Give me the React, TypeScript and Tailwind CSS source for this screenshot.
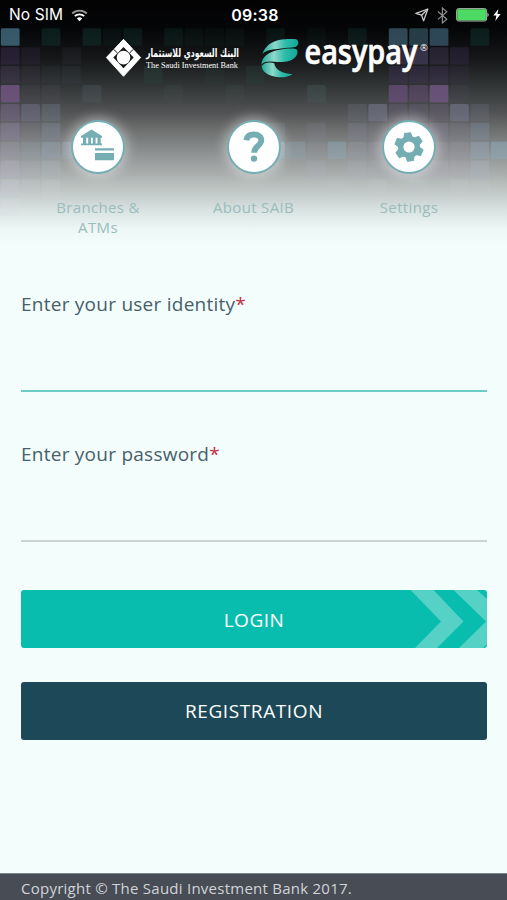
import type { ReactNode } from "react";
import { clsx } from "clsx";

// [column, row, colour, opacity] of the lit tiles behind the header
const tiles: [number, number, string, number][] = [
  [0, 0, "#3d6274", 0.9], [2, 0, "#12332f", 0.5], [4, 0, "#12332f", 0.5], [5, 0, "#12332f", 0.2],
  [6, 0, "#12332f", 0.4], [8, 0, "#12332f", 0.35], [9, 0, "#12332f", 0.2], [10, 0, "#12332f", 0.15],
  [11, 0, "#12332f", 0.2], [13, 0, "#12332f", 0.3], [15, 0, "#12332f", 0.15], [17, 0, "#12332f", 0.4],
  [19, 0, "#35505f", 0.9], [20, 0, "#2b4652", 0.85], [21, 0, "#304b5b", 0.95], [23, 0, "#12332f", 0.5],
  [0, 1, "#3a2c50", 0.5], [1, 1, "#3a2c48", 0.3], [3, 1, "#3a3c48", 0.2],
  [19, 1, "#44405c", 0.5], [20, 1, "#44405c", 0.7], [21, 1, "#3d3450", 0.5], [22, 1, "#3d2c50", 0.4],
  [0, 2, "#4d3c60", 0.4], [1, 2, "#433c50", 0.25], [2, 2, "#434850", 0.15], [3, 2, "#434c54", 0.2],
  [7, 2, "#27423c", 0.45], [10, 2, "#27423c", 0.2], [12, 2, "#27423c", 0.35],
  [19, 2, "#44345c", 0.4], [20, 2, "#44345c", 0.4], [21, 2, "#44345c", 0.4], [22, 2, "#44345c", 0.2],
  [0, 3, "#745684", 0.8], [1, 3, "#565260", 0.2], [2, 3, "#565260", 0.2], [4, 3, "#526066", 0.3],
  [8, 3, "#526066", 0.1], [11, 3, "#526066", 0.1], [15, 3, "#48625f", 0.3],
  [19, 3, "#684f79", 0.75], [20, 3, "#604b70", 0.6], [21, 3, "#705681", 0.85], [22, 3, "#504c60", 0.2],
  [0, 4, "#78688c", 0.5], [1, 4, "#74708c", 0.5], [2, 4, "#707888", 0.4], [17, 4, "#6c7080", 0.3],
  [18, 4, "#77768d", 0.6], [19, 4, "#706480", 0.35], [20, 4, "#706480", 0.35], [21, 4, "#706480", 0.35],
  [22, 4, "#77768d", 0.6], [23, 4, "#6c7080", 0.3],
  [0, 5, "#8a80a0", 0.5], [1, 5, "#858095", 0.2], [2, 5, "#858da0", 0.35], [13, 5, "#7c8c94", 0.25],
  [15, 5, "#858498", 0.2], [17, 5, "#808498", 0.3], [18, 5, "#858098", 0.2], [19, 5, "#857c98", 0.25],
  [20, 5, "#857c98", 0.25], [21, 5, "#857c98", 0.4], [22, 5, "#857c98", 0.25], [23, 5, "#808ca0", 0.4],
  [0, 6, "#9c98ac", 0.4], [1, 6, "#94a0ac", 0.3], [2, 6, "#94a2b0", 0.5], [3, 6, "#94a4b0", 0.5],
  [13, 6, "#8ea6b6", 0.7], [14, 6, "#8ea6b0", 0.4], [15, 6, "#949cac", 0.2], [16, 6, "#8ea6b6", 0.5],
  [17, 6, "#98a0ac", 0.3], [18, 6, "#9c98ac", 0.3], [19, 6, "#9c98ac", 0.3], [21, 6, "#9c98ac", 0.3],
  [22, 6, "#9c98ac", 0.3], [23, 6, "#94a4b4", 0.5], [24, 6, "#8ea6b6", 0.6],
  [0, 7, "#b4b0c4", 0.45], [1, 7, "#b0b0c0", 0.25], [2, 7, "#b0b8c4", 0.3], [13, 7, "#acb8bc", 0.2],
  [15, 7, "#b0b0bc", 0.2], [17, 7, "#b0b0bc", 0.25], [18, 7, "#b0b0c0", 0.2], [19, 7, "#b4acc0", 0.3],
  [20, 7, "#b4acc0", 0.3], [21, 7, "#b4acc0", 0.3], [22, 7, "#b4acc0", 0.2], [23, 7, "#b0b4c4", 0.35],
  [0, 8, "#ccc8d8", 0.35], [1, 8, "#ccccd8", 0.2], [2, 8, "#ccd0d8", 0.2], [16, 8, "#c8ccd4", 0.1],
  [18, 8, "#ccc8d4", 0.2], [20, 8, "#ccc8d4", 0.15], [22, 8, "#ccc8d4", 0.2], [23, 8, "#ccd0d8", 0.15],
  [0, 9, "#dcdce8", 0.25],
];

function Mosaic() {
  return (
    <svg className="absolute inset-0" width="507" height="250" aria-hidden="true">
      {tiles.map(([col, row, fill, opacity]) => (
        <rect
          key={`${col}-${row}`}
          x={0.8 + col * 20.42}
          y={28.3 + row * 18.9}
          width={18.8}
          height={17.4}
          rx={1.5}
          fill={fill}
          opacity={opacity}
        />
      ))}
    </svg>
  );
}

function StatusBar() {
  return (
    <div className="relative grid h-7 grid-cols-3 items-center pt-0.5 pr-1.5 pl-[9px] text-white">
      <div className="flex items-center gap-2">
        <span className="font-[Inter,sans-serif] text-[15.5px] leading-5 tracking-[0.1px]">No SIM</span>
        <svg width="17" height="13" viewBox="0 0 17 13" fill="none" stroke="currentColor" strokeWidth="1.9">
          <path d="M1.2 4.5C5.2.6 11.8.6 15.8 4.5" stroke="#999" />
          <path d="M3.8 7.2C6.3 4.7 10.7 4.7 13.2 7.2" />
          <path d="M8.5 12.2 5.8 9.4C7.2 8 9.8 8 11.2 9.4Z" fill="currentColor" stroke="none" />
        </svg>
      </div>
      <span className="text-center font-[Inter,sans-serif] text-[16px] leading-5 font-semibold tracking-[0.2px]">09:38</span>
      <div className="flex items-center justify-end">
        <svg width="14" height="14" viewBox="0 0 14 14" fill="none" stroke="#c9c9c9" strokeWidth="1.3" strokeLinejoin="round">
          <path d="M12.8 1 .9 5.4l5.7 1.8 2 5.7Z" />
          <path d="M12.8 1 6.6 7.2" />
        </svg>
        <svg className="ml-2" width="11" height="17" viewBox="0 0 11 17" fill="none" stroke="#8c8c8c" strokeWidth="1.2">
          <path d="m1 4.5 8.8 7.7-4.4 3.8V1l4.4 3.7L1 12.4" />
        </svg>
        <svg className="ml-2" width="34" height="14" viewBox="0 0 34 14">
          <rect x=".6" y=".6" width="30" height="12.4" rx="2" fill="#26472d" stroke="#a3b5a5" />
          <rect x="1.3" y="1.3" width="28.6" height="11" rx="1" fill="#4cd964" />
          <path d="M31.5 4.5q2.3 2.3 0 4.6Z" fill="#ddd" />
        </svg>
        <svg className="ml-[3px]" width="8" height="12" viewBox="0 0 8 12" fill="#fff">
          <path d="M5.4 0 .4 6.6h3L2.3 12 7.6 5H4.4Z" />
        </svg>
      </div>
    </div>
  );
}

function Logos() {
  return (
    <div className="relative flex h-14 items-start pt-2.5 pl-[105px]">
      <svg className="shrink-0" width="37" height="40" viewBox="0 0 37 40">
        <path d="M18.5 1.3 35.6 19.5 18.5 38.3 1.4 19.5Z" fill="#fff" stroke="#fff" strokeLinejoin="round" />
        <path d="M18.5 9 28.7 19.5 18.5 30.3 8.3 19.5Z" fill="#161718" />
        <path d="m8.3 11 4.2 4M28.7 11l-4.2 4" stroke="#161718" strokeWidth="1" />
        <circle cx="18.5" cy="19.6" r="6.8" fill="#fff" />
      </svg>
      <svg className="mt-1 ml-[3px] shrink-0 overflow-visible" width="96" height="32" viewBox="0 0 96 32" fill="#fff">
        <text x="1" y="14.5" textLength="93" lengthAdjust="spacingAndGlyphs" direction="rtl" textAnchor="end" fontFamily="DejaVu Sans, sans-serif" fontSize="11.5" fontWeight="bold">البنك السعودي للاستثمار</text>
        <text x="1" y="25.5" textLength="92" lengthAdjust="spacingAndGlyphs" fontFamily="Liberation Serif, serif" fontSize="8">The Saudi Investment Bank</text>
      </svg>
      <svg className="-mt-px ml-5 shrink-0" width="40" height="42" viewBox="0 0 40 42">
        <defs>
          <linearGradient id="swoosh" x1="0" x2="1">
            <stop offset="0" stopColor="#1fa898" />
            <stop offset=".35" stopColor="#8fd8c9" />
            <stop offset=".65" stopColor="#2cbba7" />
            <stop offset="1" stopColor="#12a899" />
          </linearGradient>
        </defs>
        <path d="M1.3 17C4 9 11 4.5 18 3c5-1 10-1.2 15.7-1 4.3.2 4.8 5.5 1.5 7.5-2.7 1.6-9 .8-15.2 2C12 12.8 5.5 12.5 1.3 17Z" fill="url(#swoosh)" />
        <path d="M.4 27.5C.8 20 7.5 14.5 18.7 12.7c5.3-.8 11.3-1.600 15.8-.8 2.8.5 2.3 5.100.3 7.600-4 5-12 6-18.300 5.500C10.500 24.500 4 23.500.4 27.500Z" fill="url(#swoosh)" />
        <path d="M.6 29c2.900-3.500 8-4.200 12.600-2.700C14.500 32.500 20 36.500 31.500 37.200c-4 2.700-10 3.700-15.500 2.800C8 38.800 1.200 35.500.6 29Z" fill="url(#swoosh)" />
      </svg>
      <svg className="-mt-3 ml-[3px] shrink-0 overflow-visible" width="130" height="54" viewBox="0 0 130 54" fill="#fff">
        <text x="0.5" y="38" textLength="113" lengthAdjust="spacingAndGlyphs" fontFamily="Open Sans, sans-serif" fontSize="34.5" fontWeight="600" stroke="#fff" strokeWidth=".7">easypay</text>
        <text x="116" y="25" fontFamily="Open Sans, sans-serif" fontSize="9.5">®</text>
      </svg>
    </div>
  );
}

function BankCardIcon() {
  return (
    <svg className="shrink-0" width="54" height="54" viewBox="0 0 54 54" fill="#74adb2">
      <path d="M10 16 20.500 9.500 31 16v1.800H10ZM12 17.500h3.200v6.500H12ZM17.200 17.500H20v6.500h-2.800ZM21.800 17.500h2.800v6.500h-2.800ZM26.500 17.500h3.200v6.500h-3.200ZM10 23.400h21v1.800H10Z" />
      <path d="M24 28.300h19v2.200H24ZM24 33h19v7.200H24Z" />
    </svg>
  );
}

function QuestionIcon() {
  return (
    <svg className="shrink-0" width="54" height="54" viewBox="0 0 54 54" fill="none" stroke="#74adb2" strokeWidth="5.8">
      <path d="M19.3 20.3C20 16 23 14.5 26.8 14.5c4.5 0 7.5 2.2 7.5 5.8 0 5.4-7.2 5.9-7.2 12.4" />
      <circle cx="27" cy="38.6" r="3.2" fill="#74adb2" stroke="none" />
    </svg>
  );
}

function GearIcon() {
  return (
    <svg className="shrink-0" width="54" height="54" viewBox="0 0 54 54" fill="#74adb2">
      <g transform="rotate(-6 27 27)" stroke="#74adb2" strokeLinejoin="round">
        <circle cx="27" cy="27" r="10.5" />
        {[0, 60, 120, 180, 240, 300].map((angle) => (
          <path key={angle} d="M22.8 18 24 13h6L31.2 18Z" transform={`rotate(${angle} 27 27)`} />
        ))}
      </g>
      <circle cx="27" cy="27" r="5.6" fill="#fff" />
    </svg>
  );
}

function NavItem({ icon, label }: { icon: ReactNode; label: string }) {
  return (
    <div className="flex w-[155.5px] flex-col items-center">
      <div className="flex size-[54px] items-center justify-center rounded-full border-2 border-[#74adb2] bg-white shadow-[0_0_12px_3px_rgba(255,255,255,0.4)]">
        {icon}
      </div>
      <span className="mt-[23px] w-[110px] text-center text-[15px] leading-5 tracking-[0.35px] text-[#9bbcbd]">{label}</span>
    </div>
  );
}

function Field({ label, type, active }: { label: string; type: string; active?: boolean }) {
  return (
    <label className="block h-[150px] text-[19px] leading-[26px] text-[#47606a]">
      <span className="tracking-[0.25px]">{label}</span>
      <span className="text-[#c52f3d]">*</span>
      <input
        type={type}
        className={clsx(
          "block h-[75px] w-full border-b-2 bg-transparent outline-none",
          active ? "border-[#6accc4]" : "border-[#cbd3d3]"
        )}
      />
    </label>
  );
}

export default function App() {
  return (
    <div className="flex h-[900px] w-[507px] flex-col overflow-hidden bg-[#f3fdfc] font-['Open_Sans',sans-serif]">
      <header className="relative h-[250px] shrink-0 bg-[linear-gradient(to_bottom,#020203_0px,#050607_30px,#161819_60px,#313435_85px,#505253_112px,#6e7070_130px,#8d9090_152px,#a7acab_172px,#c1c9c7_192px,#d8e2e0_210px,#ecf6f4_228px,#f3fdfc_245px)]">
        <Mosaic />
        <StatusBar />
        <Logos />
        <nav className="relative flex justify-center pt-9">
          <NavItem icon={<BankCardIcon />} label="Branches & ATMs" />
          <NavItem icon={<QuestionIcon />} label="About SAIB" />
          <NavItem icon={<GearIcon />} label="Settings" />
        </nav>
      </header>

      <main className="flex-1 pt-[41px] pr-5 pl-[21px]">
        <Field label="Enter your user identity" type="text" active />
        <Field label="Enter your password" type="password" />

        <button className="relative mt-[-1px] block h-[58px] w-full overflow-hidden rounded-[3px] bg-[#08bdae] pt-0.5 text-[19px] tracking-[0.5px] text-white">
          LOGIN
          <svg className="absolute top-0 right-0" width="78" height="58" viewBox="0 0 78 58" fill="#55d1c6">
            <path d="M1.5 0H24.5L54.5 31.5 28 58H6L32 31.5Z" />
            <path d="M44.5 0H68L78 9V54L74 58H50L77 31.5Z" />
          </svg>
        </button>
        <button className="mt-[34px] block h-[58px] w-full rounded-[3px] bg-[#1d4857] pt-px text-[19px] tracking-[0.6px] text-white">
          REGISTRATION
        </button>
      </main>

      <footer className="flex h-[27px] shrink-0 items-center border-t border-[#7b8288] bg-[#484c55] px-[21px] pt-0.5 text-[15px] tracking-[0.25px] text-[#d0d4d9]">
        Copyright © The Saudi Investment Bank 2017.
      </footer>
    </div>
  );
}
